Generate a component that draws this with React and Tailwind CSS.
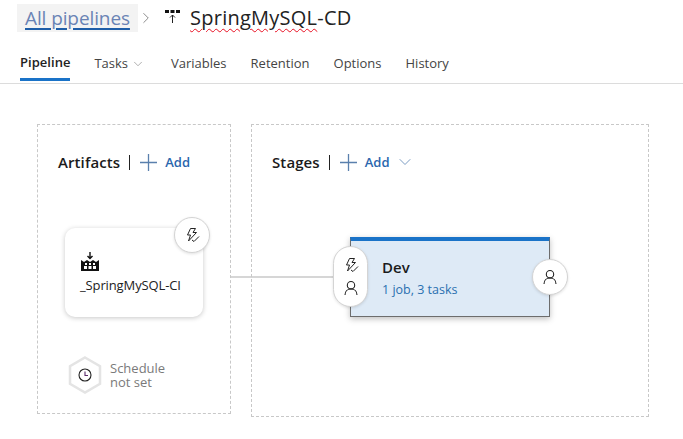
import React from "react";
import { ChevronDown, ChevronRight } from "lucide-react";

const tabs = ["Tasks", "Variables", "Retention", "Options", "History"];

const TriggerIcon = () => (
  <svg width="16" height="16" viewBox="0 0 16 16" fill="none" stroke="#222" strokeWidth="1">
    <path d="M6.5 1.5h5L9 5.5h3.5L4.5 14l2-6H3.5z" />
    <path d="M8 13l2 1.5L15 9.5" />
  </svg>
);

const UserIcon = () => (
  <svg width="16" height="16" viewBox="0 0 16 16" fill="none" stroke="#222" strokeWidth="1.1">
    <circle cx="8" cy="5.2" r="3.7" />
    <path d="M2 15c0-3.5 2.5-6 6-6s6 2.5 6 6" />
  </svg>
);

const PipelineIcon = () => (
  <svg width="15" height="14" viewBox="0 0 15 14">
    <path d="M0 0h4v3H0zM5.5 0h4v3h-4zM11 0h4v3h-4z" fill="#111" />
    <path d="M7.5 13V5M5 7.5l2.5-2.5L10 7.5" fill="none" stroke="#222" strokeWidth="1" />
  </svg>
);

const BuildIcon = () => (
  <svg width="18" height="20" viewBox="0 0 18 20">
    <path d="M9 0v6M6.5 4L9 6.5 11.500 4" fill="none" stroke="#111" strokeWidth="1.400" />
    <path d="M0 8l3 2 3-2 3 2 3-2 3 2 3-2v11H0z" fill="#111" />
    <path d="M3 14h3v3H3zM7.500 14h3v3h-3zM12 14h3v3h-3zM4 11h2v2H4zM8 11h2v2H8zM12 11h2v2h-2z" fill="#fff" />
  </svg>
);

const ClockHex = () => (
  <svg width="34" height="38" viewBox="0 0 34 38" fill="none">
    <path d="M17 1.500l15 8.700v17.600l-15 8.700-15-8.700V10.200z" stroke="#e4e4e4" strokeWidth="2.500" fill="#fff" />
    <circle cx="17" cy="19" r="6" stroke="#222" strokeWidth="1.100" />
    <path d="M17 15.500V19.500h3" stroke="#5a2a6a" strokeWidth="1.100" />
  </svg>
);

const PlusIcon = () => (
  <svg width="17" height="17" viewBox="0 0 17 17" stroke="#5a80ad" strokeWidth="1.300">
    <path d="M8.500 0v17M0 8.500h17" />
  </svg>
);

const Circle = ({ className, children }) => (
  <div className={`absolute z-10 flex items-center justify-center rounded-full bg-white border border-[#d4d4d4] shadow-[0_1px_3px_rgba(0,0,0,0.12)] ${className}`}>
    {children}
  </div>
);

const SectionHeader = ({ title, chevron }) => (
  <div className="flex items-center h-[22px] text-[15px] leading-none">
    <span className="font-semibold text-[#1b1b1b] tracking-[0.1px]">{title}</span>
    <span className="ml-[9px] mr-[10px] w-px h-[15px] bg-[#222]" />
    <PlusIcon />
    <span className="ml-[8px] text-[13px] font-semibold text-[#2a66ad]">Add</span>
    {chevron && <ChevronDown size={20} strokeWidth={1.100} className="ml-[5px] text-[#6f93bd]" />}
  </div>
);

export default function App() {
  return (
    <div className="relative w-[683px] h-[439px] overflow-hidden bg-white font-['Open_Sans','Noto_Sans',sans-serif] text-[#222]">
      {/* Title row */}
      <div className="flex items-center pl-[17px] pt-1 h-[32px]">
        <span className="h-[28px] w-[121px] pl-2 bg-[#f3f3f3] text-[19px] leading-[28px] tracking-[-0.1px] text-[#6a83b5] underline decoration-[#1f5ea8] decoration-[2px] underline-offset-[3px] whitespace-nowrap">
          All pipelines
        </span>
        <ChevronRight size={18} strokeWidth={1} className="ml-[-1px] text-[#666]" />
        <span className="ml-[10px] mt-[-2px]"><PipelineIcon /></span>
        <span className="ml-[10px] text-[20px] tracking-[0.25px] leading-[28px] text-[#222] whitespace-nowrap">
          <span className="underline decoration-wavy decoration-[#e81123] decoration-1 underline-offset-[3px]">SpringMySQL</span>-CD
        </span>
      </div>

      {/* Tabs */}
      <div className="flex h-[52px] pl-5 border-b border-[#dcdcdc] text-[13px] text-[#444]">
        <div className="flex items-center h-[49px] pt-[15px] font-semibold text-[#222] tracking-[0.03px] border-b-[3px] border-[#1a73c8]">
          Pipeline
        </div>
        <div className="flex items-center h-[49px] pt-[15px] ml-6">
          {tabs[0]}
          <ChevronDown size={14} strokeWidth={1} className="ml-[3px] text-[#777]" />
        </div>
        {tabs.slice(1).map((tab, i) => (
          <div key={tab} className={`flex items-center h-[49px] pt-[15px] ${i === 0 ? "ml-[26px]" : "ml-6"}`}>
            {tab}
          </div>
        ))}
      </div>

      {/* Canvas */}
      <div className="relative flex gap-5 pl-[37px] pt-[40px]">
        <div className="absolute left-[231px] top-[192px] w-[102px] h-[2px] bg-[#d6d6d6]" />

        <div className="relative w-[194px] h-[290px] border border-dashed border-[#c8c8c8] pl-5 pt-[26px]">
          <SectionHeader title="Artifacts" />
          <div className="relative mt-[55px] ml-[7px] w-[138px] h-[89px] rounded-[10px] bg-white shadow-[0_1px_5px_rgba(0,0,0,0.22)] pl-[16px] pt-[24px]">
            <Circle className="right-[-7px] top-[-11px] w-[36px] h-[36px]"><TriggerIcon /></Circle>
            <BuildIcon />
            <div className="mt-[4px] ml-[-1px] text-[13px] leading-[18px] tracking-[-0.12px] text-[#222] whitespace-nowrap">_SpringMySQL-CI</div>
          </div>
          <div className="flex items-center mt-[39px] ml-[10px]">
            <ClockHex />
            <div className="ml-[8px] text-[13px] leading-[14px] text-[#7a7a7a]">
              <div>Schedule</div>
              <div>not set</div>
            </div>
          </div>
        </div>

        <div className="relative w-[398px] h-[293px] border border-dashed border-[#c8c8c8] pl-5 pt-[26px]">
          <SectionHeader title="Stages" chevron />
          <div className="relative mt-[64px] ml-[78px] w-[200px] h-[80px] bg-[#deeaf6] border border-[#6d6d6d] border-t-[4px] border-t-[#1a73c8] shadow-[0_2px_6px_rgba(0,0,0,0.25)] pl-[31px] pt-[16px]">
            <div className="text-[15px] leading-[20px] font-semibold text-[#1b1b1b]">Dev</div>
            <div className="mt-[5px] text-[12.5px] leading-[16px] text-[#2a70b0] whitespace-nowrap">1 job, 3 tasks</div>
            <div className="absolute left-[-18px] top-[5px] z-10 flex flex-col items-center justify-center gap-[7px] w-[35px] h-[61px] rounded-full bg-white border border-[#d4d4d4] shadow-[0_1px_3px_rgba(0,0,0,0.12)]">
              <TriggerIcon />
              <UserIcon />
            </div>
            <Circle className="right-[-19px] top-[18px] w-[36px] h-[36px]"><UserIcon /></Circle>
          </div>
        </div>
      </div>
    </div>
  );
}
